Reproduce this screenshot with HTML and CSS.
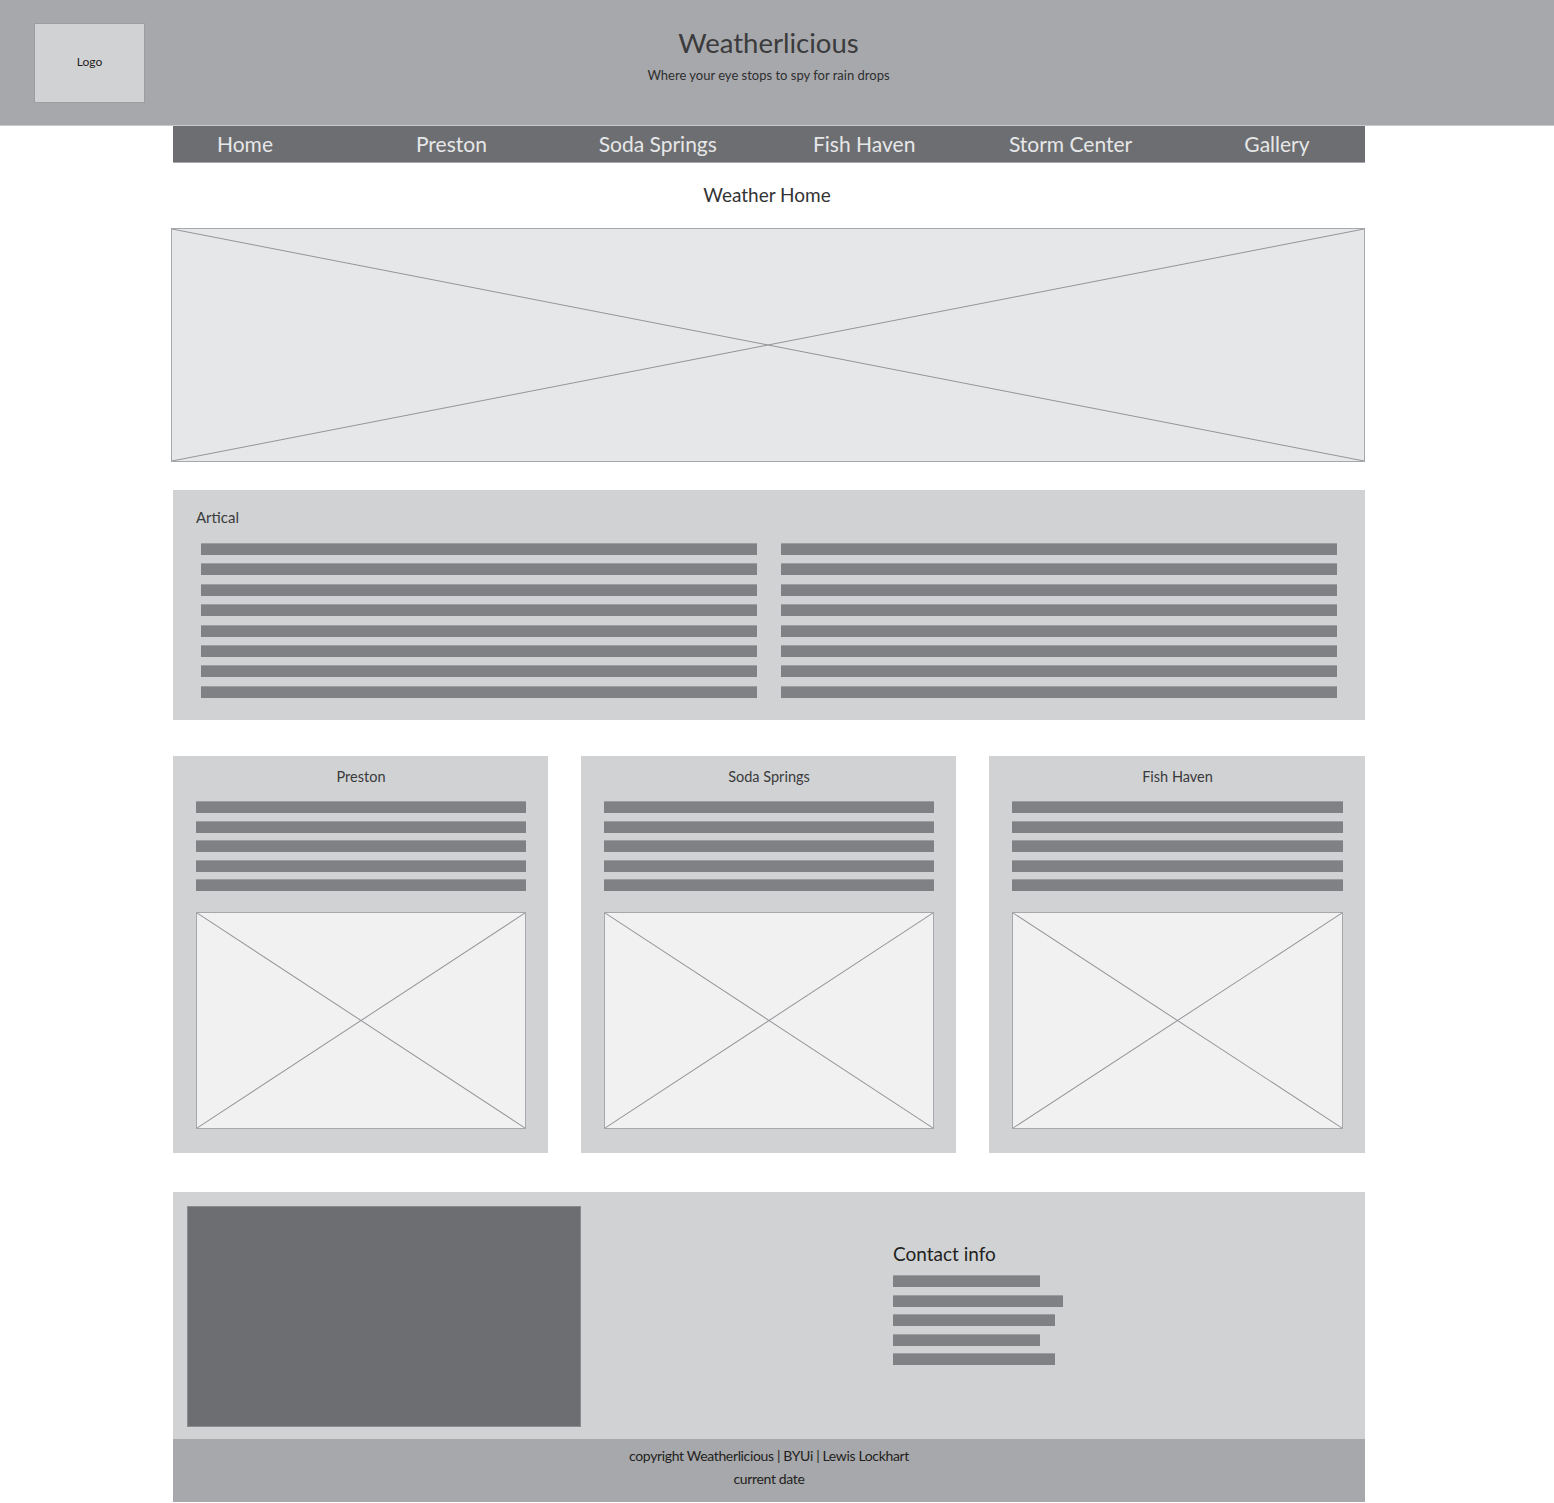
FILE: index.html
```html
<!DOCTYPE html>
<html lang="en">
<head>
<meta charset="utf-8">
<title>Weatherlicious</title>
<link rel="stylesheet" href="styles.css">
</head>
<body>
<header class="site-header">
  <div class="logo">Logo</div>
  <div class="brand">
    <h1 class="brand-title">Weatherlicious</h1>
    <p class="brand-tag">Where your eye stops to spy for rain drops</p>
  </div>
</header>
<div class="page">
  <nav class="nav">
    <a class="nav-item">Home</a>
    <a class="nav-item">Preston</a>
    <a class="nav-item">Soda Springs</a>
    <a class="nav-item">Fish Haven</a>
    <a class="nav-item">Storm Center</a>
    <a class="nav-item">Gallery</a>
  </nav>
  <h2 class="page-title">Weather Home</h2>
  <div class="hero placeholder">
    <svg class="x" viewBox="0 0 100 100" preserveAspectRatio="none"><line x1="0" y1="0" x2="100" y2="100" vector-effect="non-scaling-stroke"/><line x1="100" y1="0" x2="0" y2="100" vector-effect="non-scaling-stroke"/></svg>
  </div>
  <section class="article">
    <h3 class="article-title">Artical</h3>
    <div class="article-cols">
      <div class="bars">
        <span class="bar"></span><span class="bar"></span><span class="bar"></span><span class="bar"></span>
        <span class="bar"></span><span class="bar"></span><span class="bar"></span><span class="bar"></span>
      </div>
      <div class="bars">
        <span class="bar"></span><span class="bar"></span><span class="bar"></span><span class="bar"></span>
        <span class="bar"></span><span class="bar"></span><span class="bar"></span><span class="bar"></span>
      </div>
    </div>
  </section>
  <section class="cards">
    <div class="card">
      <h3 class="card-title">Preston</h3>
      <div class="bars card-bars">
        <span class="bar"></span><span class="bar"></span><span class="bar"></span><span class="bar"></span><span class="bar"></span>
      </div>
      <div class="card-img placeholder">
        <svg class="x" viewBox="0 0 100 100" preserveAspectRatio="none"><line x1="0" y1="0" x2="100" y2="100" vector-effect="non-scaling-stroke"/><line x1="100" y1="0" x2="0" y2="100" vector-effect="non-scaling-stroke"/></svg>
      </div>
    </div>
    <div class="card">
      <h3 class="card-title">Soda Springs</h3>
      <div class="bars card-bars">
        <span class="bar"></span><span class="bar"></span><span class="bar"></span><span class="bar"></span><span class="bar"></span>
      </div>
      <div class="card-img placeholder">
        <svg class="x" viewBox="0 0 100 100" preserveAspectRatio="none"><line x1="0" y1="0" x2="100" y2="100" vector-effect="non-scaling-stroke"/><line x1="100" y1="0" x2="0" y2="100" vector-effect="non-scaling-stroke"/></svg>
      </div>
    </div>
    <div class="card">
      <h3 class="card-title">Fish Haven</h3>
      <div class="bars card-bars">
        <span class="bar"></span><span class="bar"></span><span class="bar"></span><span class="bar"></span><span class="bar"></span>
      </div>
      <div class="card-img placeholder">
        <svg class="x" viewBox="0 0 100 100" preserveAspectRatio="none"><line x1="0" y1="0" x2="100" y2="100" vector-effect="non-scaling-stroke"/><line x1="100" y1="0" x2="0" y2="100" vector-effect="non-scaling-stroke"/></svg>
      </div>
    </div>
  </section>
  <footer class="footer">
    <div class="footer-main">
      <div class="map-box"></div>
      <div class="contact">
        <h3 class="contact-title">Contact info</h3>
        <div class="contact-bars">
          <span class="cbar w147"></span>
          <span class="cbar w170"></span>
          <span class="cbar w162"></span>
          <span class="cbar w147"></span>
          <span class="cbar w162"></span>
        </div>
      </div>
    </div>
    <div class="footer-bottom">
      <p class="copy">copyright Weatherlicious | BYUi | Lewis Lockhart</p>
      <p class="copy">current date</p>
    </div>
  </footer>
</div>
</body>
</html>
```
FILE: styles.css
```css
* { box-sizing: border-box; }
body {
  margin: 0;
  background: #ffffff;
  font-family: Lato, "Open Sans", sans-serif;
  color: #3a3a3c;
}
h1, h2, h3, p { margin: 0; font-weight: normal; }

.site-header {
  height: 126px;
  background: #a7a8ab;
  display: flex;
  align-items: flex-start;
  padding: 23px 162px 0 34px;
  border-bottom: 1px solid #c9cacc;
}
.logo {
  width: 111px;
  height: 80px;
  background: #d1d2d4;
  border: 1px solid #9c9da0;
  display: flex;
  align-items: center;
  justify-content: center;
  font-size: 12px;
  padding-bottom: 3px;
  color: #231f20;
}
.brand {
  flex: 1;
  text-align: center;
}
.brand-title {
  font-size: 27.5px;
  line-height: 34px;
  color: #3b3b3d;
  margin-top: 3px;
}
.brand-tag {
  font-size: 13px;
  line-height: 16px;
  margin-top: 7px;
  color: #2e2e30;
}

.page {
  width: 1192px;
  margin-left: 173px;
}
.nav {
  height: 37px;
  background: #6d6e71;
  border-bottom: 1px solid #a7a8ab;
  display: flex;
  justify-content: space-between;
  align-items: center;
  padding: 0 18px 0 2px;
}
.nav-item {
  width: 140px;
  text-align: center;
  color: #e6e7e8;
  font-size: 21px;
  line-height: 32px;
}

.page-title {
  text-align: center;
  font-size: 19px;
  line-height: 24px;
  margin: 20px 0 0 -4px;
  color: #333335;
}

.placeholder {
  position: relative;
  border: 1px solid #a7a8ab;
}
.x {
  position: absolute;
  inset: 0;
  width: 100%;
  height: 100%;
  stroke: #949598;
  stroke-width: 1;
}
.hero {
  margin: 21px 0 0 -2px;
  width: 1194px;
  height: 234px;
  background: #e6e7e8;
}

.article {
  margin-top: 28px;
  height: 230px;
  background: #d1d2d4;
  padding: 17px 28px 0 23px;
}
.article-title {
  font-size: 15px;
  line-height: 20px;
  color: #3a3a3c;
}
.article-cols {
  display: grid;
  grid-template-columns: 556px 556px;
  column-gap: 24px;
  margin: 16px 0 0 5px;
}
.bars {
  display: flex;
  flex-direction: column;
  gap: 8.4px;
}
.bar {
  display: block;
  height: 12px;
  background: #808184;
  border-top: 1px solid #9c9da0;
}

.cards {
  margin-top: 36px;
  display: grid;
  grid-template-columns: 375px 375px 376px;
  column-gap: 33px;
}
.card {
  background: #d1d2d4;
  height: 397px;
  padding: 11px 22px 0 23px;
}
.card-title {
  text-align: center;
  font-size: 14.5px;
  line-height: 20px;
  color: #3a3a3c;
}
.card-bars {
  margin-top: 14px;
  gap: 7.5px;
}
.card-img {
  margin-top: 21px;
  height: 217px;
  background: #f1f1f2;
}

.footer {
  margin-top: 39px;
}
.footer-main {
  height: 247px;
  background: #d1d2d4;
  padding: 14px 0 0 14px;
  display: flex;
}
.map-box {
  width: 394px;
  height: 221px;
  background: #6d6e71;
  border: 1px solid #8a8b8e;
}
.contact {
  margin-left: 312px;
  padding-top: 36px;
}
.contact-title {
  font-size: 19px;
  line-height: 24px;
  color: #231f20;
}
.contact-bars {
  margin-top: 9px;
  display: flex;
  flex-direction: column;
  gap: 7.5px;
}
.cbar {
  display: block;
  height: 12px;
  background: #808184;
  border-top: 1px solid #9c9da0;
}
.w147 { width: 147px; }
.w162 { width: 162px; }
.w170 { width: 170px; }

.footer-bottom {
  height: 63px;
  background: #a7a8ab;
  padding-top: 5px;
  text-align: center;
}
.copy {
  font-size: 14px;
  line-height: 23px;
  color: #231f20;
  letter-spacing: -0.35px;
}
```
